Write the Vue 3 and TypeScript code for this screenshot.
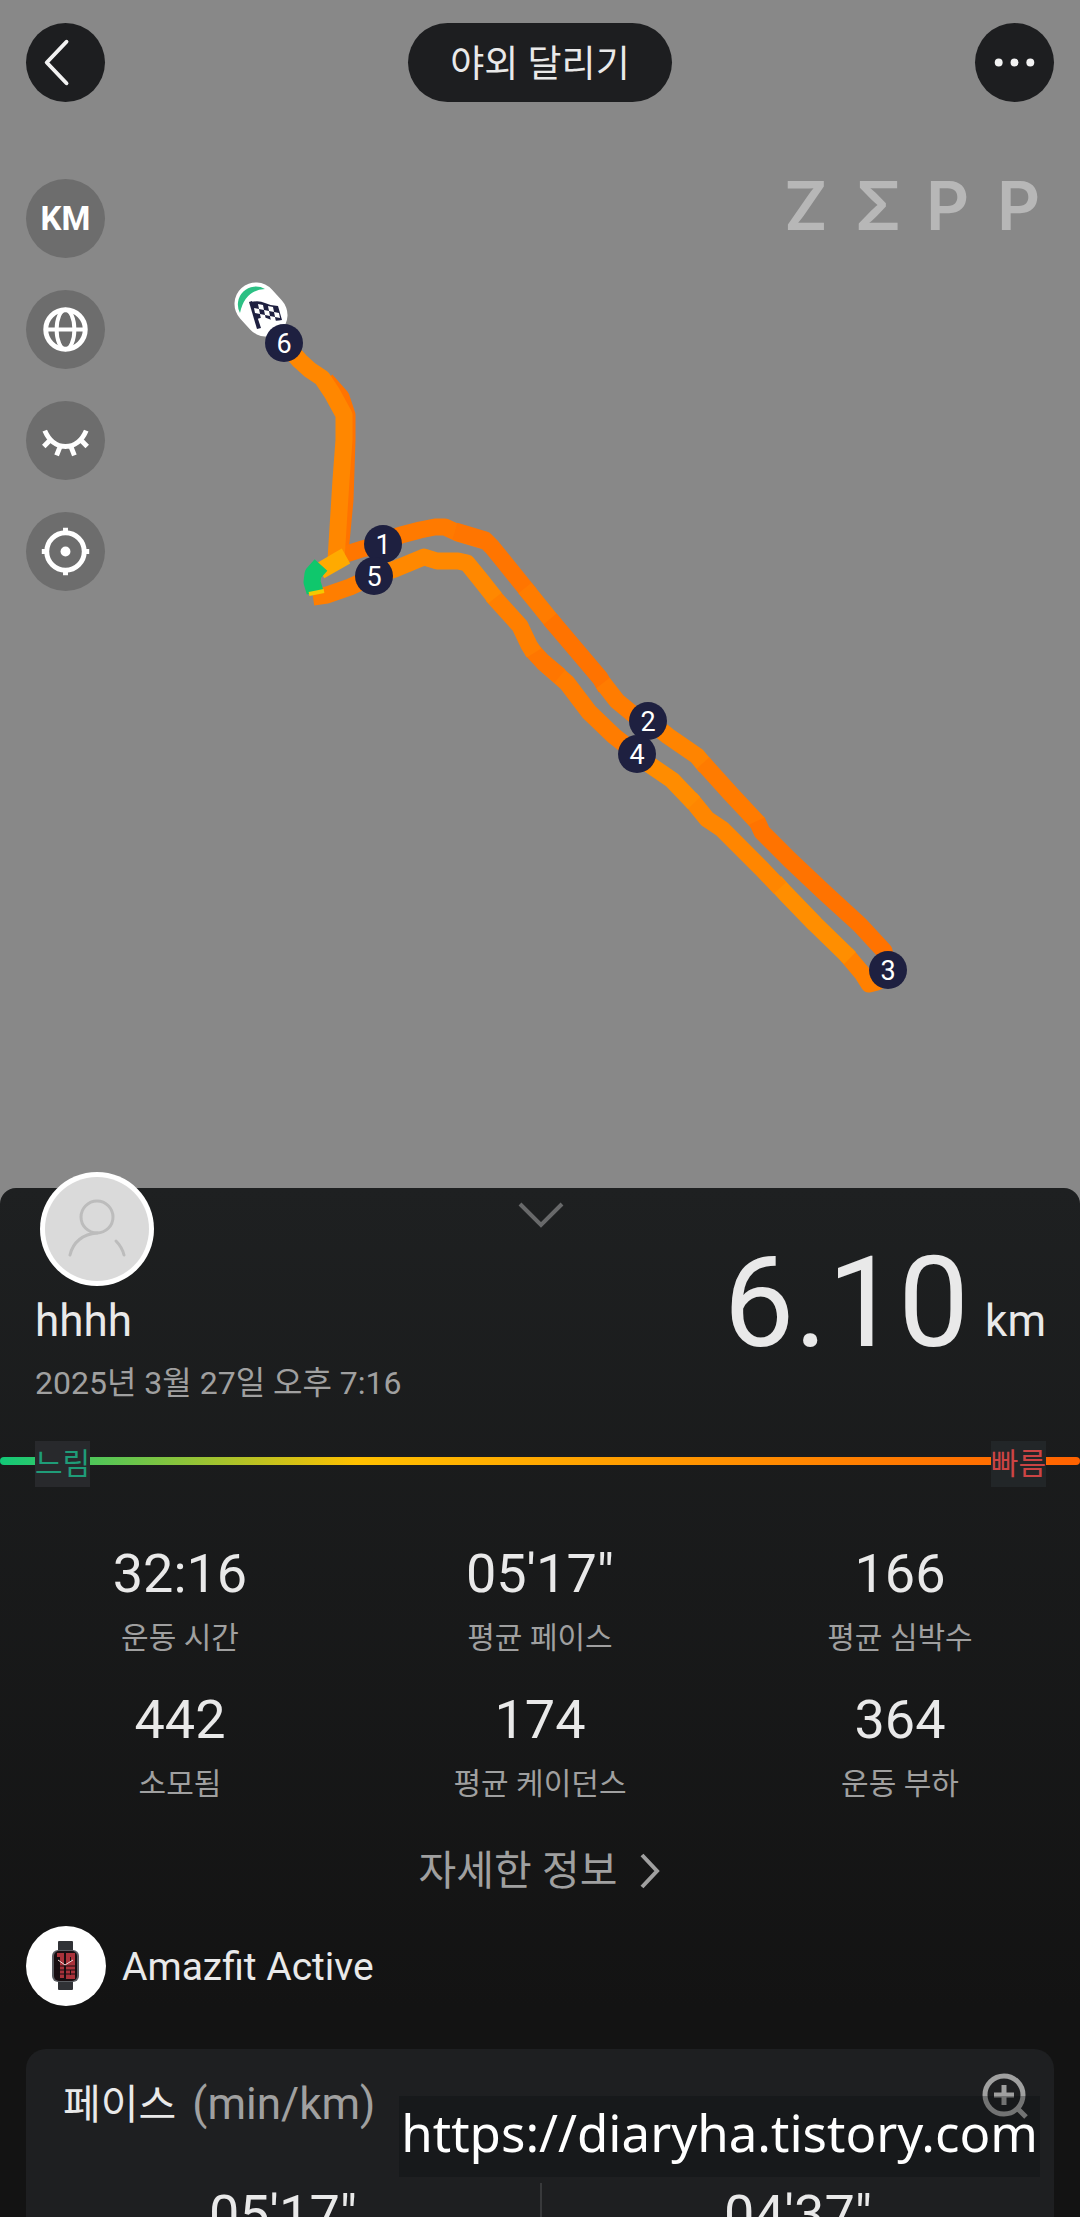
<script setup lang="ts">
interface Segment { color: string; points: string }
interface Pin { label: number; x: number; y: number }
interface Stat { value: string; label: string }

const segments: Segment[] = [
  { color: '#ff7300', points: '326,380 341,397 347,415 347,440 345,500 340,553' },
  { color: '#ff7600', points: '340,556 362,549 383,544 400,535' },
  { color: '#ff7a00', points: '383,542 401,535 420,530 435,527 445,527 458,533 485,541' },
  { color: '#ff7500', points: '455,531 485,540 492,547 505,563 530,594' },
  { color: '#ff7c00', points: '525,588 555,625' },
  { color: '#ff7300', points: '550,619 600,678 606,688' },
  { color: '#ff7c00', points: '603,683 617,701 634,715 648,722' },
  { color: '#ff8400', points: '648,720 668,736 697,756 706,767' },
  { color: '#ff7b00', points: '703,763 730,793 759,824' },
  { color: '#ff7300', points: '757,821 762,832 790,860 825,893 860,925 884,951 888,970' },
  { color: '#ff8000', points: '888,970 877,982 869,984 862,973 846,954' },
  { color: '#ff8e00', points: '850,958 815,924 785,893 775,882' },
  { color: '#ff8600', points: '780,888 762,869 722,829 707,819 690,798' },
  { color: '#ff8c00', points: '694,803 672,780 650,765 637,754' },
  { color: '#ff7c00', points: '637,754 614,736 589,712 567,683 543,662' },
  { color: '#ff7600', points: '560,676 543,662 531,649' },
  { color: '#ff7f00', points: '534,653 529,645 520,626 492,595' },
  { color: '#ff8800', points: '495,598 480,579 467,563 458,561 437,561 424,557 395,569 374,576' },
  { color: '#ff7e00', points: '374,576 350,587 327,595 313,597' },
  { color: '#ff8700', points: '284,343 300,361 310,370 322,378 332,393 344,415 344,440 341,480 336,560' },
  { color: '#ffaa00', points: '346,556 339,560 320,571' },
  { color: '#0fc76c', points: '321,565 313,574 312,582 315,592' },
  { color: '#f5c800', points: '309,594 324,591' },
]

const flagCells: [number, number][] = [[1, 0], [3, 0], [2, 1], [4, 1], [0, 1], [1, 2], [3, 2]]

const pins: Pin[] = [
  { label: 1, x: 383, y: 544 },
  { label: 2, x: 648, y: 721 },
  { label: 3, x: 888, y: 970 },
  { label: 4, x: 637, y: 754 },
  { label: 5, x: 374, y: 576 },
  { label: 6, x: 284, y: 343 },
]

const stats: Stat[] = [
  { value: '32:16', label: '운동 시간' },
  { value: '05\'17"', label: '평균 페이스' },
  { value: '166', label: '평균 심박수' },
  { value: '442', label: '소모됨' },
  { value: '174', label: '평균 케이던스' },
  { value: '364', label: '운동 부하' },
]

const paces: string[] = ['05\'17"', '04\'37"']
</script>

<template>
  <main class="screen">
    <section class="map">
      <svg class="route" viewBox="0 0 1080 1204" role="img" aria-label="달리기 경로">
        <g fill="none" stroke-linejoin="round">
          <polyline v-for="(s, i) in segments" :key="i" :points="s.points" :stroke="s.color"
            :stroke-width="s.color === '#f5c800' ? 4 : 17" />
        </g>
        <path d="M256 304L266 315" stroke="#fff" stroke-width="43" stroke-linecap="round" />
        <path d="M240 313A18 18 0 0 1 265 289Q245 290 240 313Z" fill="#2cc084" />
        <g fill="#1e2040">
          <path d="M249 302L252 301L261 328L257 329Z" />
          <path d="M251 302Q259 300 265 303T278 306L282 320Q274 322 269 319T257 319Z" />
          <g fill="#fff" transform="matrix(5 1 1 5 253 303)">
            <rect v-for="[x, y] in flagCells" :key="`${x}-${y}`" :x="x" :y="y" width="1" height="1" />
          </g>
        </g>
        <g v-for="p in pins" :key="p.label">
          <circle :cx="p.x" :cy="p.y" r="19" fill="#1e2040" />
          <text class="pin-text" :x="p.x" :y="p.y + 10" text-anchor="middle">{{ p.label }}</text>
        </g>
      </svg>

      <div class="overlay">
        <header class="topbar">
          <button class="round dark" type="button" aria-label="뒤로">
            <svg viewBox="0 0 80 80"><path d="M41 19L21 40L41 61" fill="none" stroke="#f2f2f2" stroke-width="4" stroke-linejoin="round" stroke-linecap="round" /></svg>
          </button>
          <h1 class="title">야외 달리기</h1>
          <button class="round dark" type="button" aria-label="더보기">
            <svg viewBox="0 0 80 80" fill="#f2f2f2"><circle cx="24" cy="40" r="4" /><circle cx="40" cy="40" r="4" /><circle cx="56" cy="40" r="4" /></svg>
          </button>
        </header>

        <div class="map-row">
          <nav class="tools">
            <button class="round km" type="button">KM</button>
            <button class="round" type="button" aria-label="지도">
              <svg viewBox="0 0 80 80" fill="none" stroke="#fff" stroke-width="4"><circle cx="40" cy="40" r="20" stroke-width="5" /><ellipse cx="40" cy="40" rx="9" ry="20" /><path d="M20 40H60" /></svg>
            </button>
            <button class="round" type="button" aria-label="숨기기">
              <svg viewBox="0 0 80 80" fill="none" stroke="#fff" stroke-width="5"><path d="M19 30Q26 46 40 46T61 30M25 39L18 46M35 45L31 55M45 45L49 55M55 39L62 46" /></svg>
            </button>
            <button class="round" type="button" aria-label="위치">
              <svg viewBox="0 0 80 80" fill="none" stroke="#fff" stroke-width="5"><circle cx="40" cy="40" r="19" /><path d="M40 16V21M40 59V64M16 40H21M59 40H64" /><circle cx="40" cy="40" r="5" fill="#fff" stroke="none" /></svg>
            </button>
          </nav>
          <p class="brand"><span>Z</span><span>Σ</span><span>P</span><span>P</span></p>
        </div>
      </div>
    </section>

    <section class="sheet">
      <div class="summary">
        <div class="person">
          <svg class="avatar" viewBox="0 0 114 114" aria-hidden="true">
            <circle cx="57" cy="57" r="57" fill="#fff" />
            <circle cx="57" cy="57" r="52" fill="#dadada" />
            <g fill="none" stroke="#bcbcbc" stroke-width="3" stroke-linecap="round">
              <circle cx="57" cy="45" r="16" />
              <path d="M57 61C43 62 33 70 30 83M76 69Q82 75 84 83" />
            </g>
          </svg>
          <h2 class="name">hhhh</h2>
          <time class="date">2025년 3월 27일 오후 7:16</time>
        </div>
        <button class="collapse" type="button" aria-label="접기">
          <svg viewBox="0 0 48 28"><path d="M3 3L24 24L45 3" fill="none" stroke="#68696a" stroke-width="4" /></svg>
        </button>
        <p class="distance"><span class="amount">6.10</span><span class="unit">km</span></p>
      </div>

      <div class="scale"><span class="slow">느림</span><span class="fast">빠름</span></div>

      <dl class="stats">
        <div v-for="s in stats" :key="s.label" class="stat">
          <dd>{{ s.value }}</dd>
          <dt>{{ s.label }}</dt>
        </div>
      </dl>

      <button class="more" type="button">
        자세한 정보
        <svg viewBox="0 0 22 36"><path d="M3 2L18 18L3 34" fill="none" stroke="#a0a0a0" stroke-width="4" /></svg>
      </button>

      <div class="device">
        <svg viewBox="0 0 80 80" aria-hidden="true">
          <circle cx="40" cy="40" r="40" fill="#fff" />
          <rect x="32" y="15" width="15" height="49" rx="1" fill="#303236" />
          <rect x="26" y="24" width="27" height="32" rx="6" fill="#5a5d62" />
          <rect x="28" y="25" width="23" height="30" rx="5" fill="#170d10" />
          <path d="M31 29H36V52M42 29H47V38H42ZM42 42H47V51H42Z" fill="none" stroke="#a8323a" stroke-width="4" />
          <path d="M28 40H51M28 44H51M28 48H51" stroke="#170d10" stroke-width="1" />
          <path d="M32 34L39 39L47 34" fill="none" stroke="#f0dcdc" stroke-width="1" />
        </svg>
        <span>Amazfit Active</span>
      </div>

      <article class="card">
        <header class="card-head">
          <h3>페이스 <small>(min/km)</small></h3>
          <button class="magnify" type="button" aria-label="확대">
            <svg viewBox="0 0 46 46" fill="none" stroke="#a0a0a0" stroke-width="5"><circle cx="22" cy="22" r="19" /><path d="M22 12V32M12 22H32M35 35L44 44" /></svg>
          </button>
        </header>
        <div class="paces">
          <span v-for="p in paces" :key="p">{{ p }}</span>
        </div>
      </article>
    </section>

    <a class="watermark" href="https://diaryha.tistory.com">https://diaryha.tistory.com</a>
  </main>
</template>

<style>
body { margin: 0; background: #131313; }
</style>

<style scoped>
.screen {
  position: relative;
  display: flex;
  flex-direction: column;
  height: 100vh;
  overflow: hidden;
  background: #888;
  color: #e9e9e9;
  font-family: Roboto, "Noto Sans CJK KR", sans-serif;
}
h1, h2, h3, p, dl, dd { margin: 0; font-weight: 400; }
button { padding: 0; border: 0; background: none; color: inherit; font: inherit; cursor: pointer; }
svg { display: block; }

.map { display: grid; flex: none; }
.route, .overlay { grid-area: 1 / 1; }
.route { width: 100%; }
.pin-text { fill: #fff; font-size: 27px; }

.overlay { padding: 23px 26px; }
.topbar { display: flex; justify-content: space-between; }
.round { width: 79px; height: 79px; border-radius: 50%; background: #6d6d6d; }
.round svg { width: 79px; height: 79px; }
.dark, .title { background: #1d1e20; }
.title {
  box-sizing: border-box;
  height: 79px;
  padding: 2px 42px 0;
  border-radius: 40px;
  font-size: 37px;
  line-height: 79px;
}
.map-row { display: flex; justify-content: space-between; margin-top: 77px; }
.tools { display: flex; flex-direction: column; gap: 32px; }
.km { color: #fff; font: 700 33px Roboto, sans-serif; }
.brand {
  display: grid;
  grid-template-columns: repeat(4, 71px);
  height: 56px;
  margin-right: -14px;
  color: #b7b7b7;
  font: 600 67px/54px Inter, sans-serif;
}

.sheet {
  flex: none;
  margin-top: -16px;
  border-radius: 16px 16px 0 0;
  background: linear-gradient(#1e2021, #131313 820px);
}
.summary { display: grid; grid-template-columns: 1fr auto 1fr; padding: 0 34px 0 35px; }
.person { display: flex; flex-direction: column; }
.avatar { width: 114px; height: 114px; margin: -16px 0 9px 5px; }
.name { font-size: 44px; line-height: 52px; }
.date { margin-top: 16px; color: #a0a0a0; font-size: 32px; line-height: 40px; white-space: nowrap; }
.collapse { align-self: start; margin-top: 13px; }
.collapse svg { width: 48px; height: 28px; }
.distance { display: flex; justify-content: flex-end; align-items: flex-end; gap: 16px; align-self: start; margin-top: 51px; }
.amount { font-size: 126px; line-height: 128px; }
.unit { margin-bottom: 20px; font-size: 44px; line-height: 52px; }

.scale {
  position: relative;
  display: flex;
  justify-content: space-between;
  margin-top: 38px;
  padding: 0 34px 0 35px;
  font-size: 30px;
  line-height: 46px;
}
.scale::before {
  content: "";
  position: absolute;
  top: 16px;
  left: 0;
  right: 0;
  height: 8px;
  border-radius: 4px;
  background: linear-gradient(90deg, #12c878, #ffc000 33%, #ff6200);
}
.scale span { position: relative; }
.slow { background: #28292c; color: #1f9c78; }
.fast { background: #222628; color: #cc4444; }

.stats { display: grid; grid-template-columns: repeat(3, 1fr); row-gap: 32px; margin-top: 55px; }
.stat { display: flex; flex-direction: column; gap: 14px; text-align: center; }
.stat dd { font-size: 54px; line-height: 64px; }
.stat dt { color: #a0a0a0; font-size: 30px; line-height: 36px; }

.more {
  display: flex;
  align-items: center;
  gap: 22px;
  margin: 45px auto 31px;
  color: #a0a0a0;
  font-size: 41px;
  line-height: 48px;
}
.more svg { width: 22px; height: 36px; }

.device { display: flex; align-items: center; gap: 16px; padding: 0 26px; font-size: 39px; }
.device svg { width: 80px; height: 80px; }
.device span { padding-top: 2px; }

.card { margin: 43px 26px 0; border-radius: 20px; background: #1e1f21; }
.card-head { display: flex; justify-content: space-between; padding: 24px 26px 0 37px; }
.card h3 { padding-top: 5px; font-size: 41px; line-height: 52px; }
.card small { margin-left: 6px; color: #a0a0a0; font-size: 44px; }
.magnify { align-self: flex-start; }
.magnify svg { width: 46px; height: 46px; }
.paces { display: grid; grid-template-columns: 1fr 1fr; margin-top: 52px; text-align: center; font-size: 54px; line-height: 64px; }
.paces span + span { border-left: 2px solid #38393b; }

.watermark {
  position: absolute;
  right: 40px;
  bottom: 40px;
  padding: 0 2px 8px;
  background: rgba(10, 12, 12, 0.3);
  color: #fff;
  font: 51px/73px "Noto Sans", sans-serif;
  text-decoration: none;
}
</style>
